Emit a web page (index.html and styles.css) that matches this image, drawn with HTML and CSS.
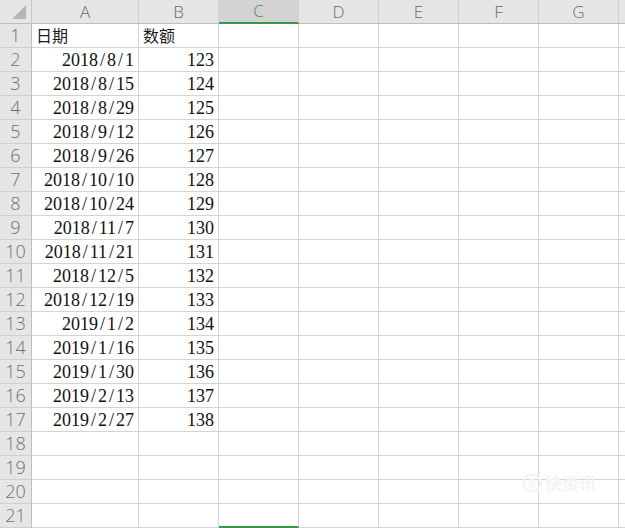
FILE: index.html
```html
<!DOCTYPE html>
<html lang="zh">
<head>
<meta charset="utf-8">
<title>Sheet</title>
<link rel="stylesheet" href="styles.css">
</head>
<body>
<div class="sheet">
  <div class="corner"><span class="tri"></span></div>
  <div class="h">A</div><div class="h">B</div><div class="h sel">C</div><div class="h">D</div><div class="h">E</div><div class="h">F</div><div class="h">G</div><div class="h last"></div>

  <div class="rh">1</div><div class="c t">日期</div><div class="c t">数额</div><div class="c"></div><div class="c"></div><div class="c"></div><div class="c"></div><div class="c"></div><div class="c last"></div>
  <div class="rh">2</div><div class="c r">2018<span class="sl">/</span>8<span class="sl">/</span>1</div><div class="c r">123</div><div class="c"></div><div class="c"></div><div class="c"></div><div class="c"></div><div class="c"></div><div class="c last"></div>
  <div class="rh">3</div><div class="c r">2018<span class="sl">/</span>8<span class="sl">/</span>15</div><div class="c r">124</div><div class="c"></div><div class="c"></div><div class="c"></div><div class="c"></div><div class="c"></div><div class="c last"></div>
  <div class="rh">4</div><div class="c r">2018<span class="sl">/</span>8<span class="sl">/</span>29</div><div class="c r">125</div><div class="c"></div><div class="c"></div><div class="c"></div><div class="c"></div><div class="c"></div><div class="c last"></div>
  <div class="rh">5</div><div class="c r">2018<span class="sl">/</span>9<span class="sl">/</span>12</div><div class="c r">126</div><div class="c"></div><div class="c"></div><div class="c"></div><div class="c"></div><div class="c"></div><div class="c last"></div>
  <div class="rh">6</div><div class="c r">2018<span class="sl">/</span>9<span class="sl">/</span>26</div><div class="c r">127</div><div class="c"></div><div class="c"></div><div class="c"></div><div class="c"></div><div class="c"></div><div class="c last"></div>
  <div class="rh">7</div><div class="c r">2018<span class="sl">/</span>10<span class="sl">/</span>10</div><div class="c r">128</div><div class="c"></div><div class="c"></div><div class="c"></div><div class="c"></div><div class="c"></div><div class="c last"></div>
  <div class="rh">8</div><div class="c r">2018<span class="sl">/</span>10<span class="sl">/</span>24</div><div class="c r">129</div><div class="c"></div><div class="c"></div><div class="c"></div><div class="c"></div><div class="c"></div><div class="c last"></div>
  <div class="rh">9</div><div class="c r">2018<span class="sl">/</span>11<span class="sl">/</span>7</div><div class="c r">130</div><div class="c"></div><div class="c"></div><div class="c"></div><div class="c"></div><div class="c"></div><div class="c last"></div>
  <div class="rh">10</div><div class="c r">2018<span class="sl">/</span>11<span class="sl">/</span>21</div><div class="c r">131</div><div class="c"></div><div class="c"></div><div class="c"></div><div class="c"></div><div class="c"></div><div class="c last"></div>
  <div class="rh">11</div><div class="c r">2018<span class="sl">/</span>12<span class="sl">/</span>5</div><div class="c r">132</div><div class="c"></div><div class="c"></div><div class="c"></div><div class="c"></div><div class="c"></div><div class="c last"></div>
  <div class="rh">12</div><div class="c r">2018<span class="sl">/</span>12<span class="sl">/</span>19</div><div class="c r">133</div><div class="c"></div><div class="c"></div><div class="c"></div><div class="c"></div><div class="c"></div><div class="c last"></div>
  <div class="rh">13</div><div class="c r">2019<span class="sl">/</span>1<span class="sl">/</span>2</div><div class="c r">134</div><div class="c"></div><div class="c"></div><div class="c"></div><div class="c"></div><div class="c"></div><div class="c last"></div>
  <div class="rh">14</div><div class="c r">2019<span class="sl">/</span>1<span class="sl">/</span>16</div><div class="c r">135</div><div class="c"></div><div class="c"></div><div class="c"></div><div class="c"></div><div class="c"></div><div class="c last"></div>
  <div class="rh">15</div><div class="c r">2019<span class="sl">/</span>1<span class="sl">/</span>30</div><div class="c r">136</div><div class="c"></div><div class="c"></div><div class="c"></div><div class="c"></div><div class="c"></div><div class="c last"></div>
  <div class="rh">16</div><div class="c r">2019<span class="sl">/</span>2<span class="sl">/</span>13</div><div class="c r">137</div><div class="c"></div><div class="c"></div><div class="c"></div><div class="c"></div><div class="c"></div><div class="c last"></div>
  <div class="rh">17</div><div class="c r">2019<span class="sl">/</span>2<span class="sl">/</span>27</div><div class="c r">138</div><div class="c"></div><div class="c"></div><div class="c"></div><div class="c"></div><div class="c"></div><div class="c last"></div>
  <div class="rh">18</div><div class="c"></div><div class="c"></div><div class="c"></div><div class="c"></div><div class="c"></div><div class="c"></div><div class="c"></div><div class="c last"></div>
  <div class="rh">19</div><div class="c"></div><div class="c"></div><div class="c"></div><div class="c"></div><div class="c"></div><div class="c"></div><div class="c"></div><div class="c last"></div>
  <div class="rh">20</div><div class="c"></div><div class="c"></div><div class="c"></div><div class="c"></div><div class="c"></div><div class="c"></div><div class="c"></div><div class="c last"></div>
  <div class="rh">21</div><div class="c"></div><div class="c"></div><div class="c selb"></div><div class="c"></div><div class="c"></div><div class="c"></div><div class="c"></div><div class="c last"></div>

  <div class="mark">
    <svg width="20" height="20" viewBox="0 0 20 20"><circle cx="10" cy="10" r="8.5" fill="none" stroke="#f4f4f4" stroke-width="2.5"/><text x="10" y="14.5" text-anchor="middle" font-size="12" fill="#f4f4f4" font-family="Liberation Sans, sans-serif" font-weight="bold">S</text></svg>
    <span>快资讯</span>
  </div>
</div>
</body>
</html>
```
FILE: styles.css
```css
* { box-sizing: border-box; }
html, body { margin: 0; padding: 0; background: #ffffff; }
body { width: 625px; height: 528px; overflow: hidden; }

.sheet {
  position: relative;
  display: grid;
  grid-template-columns: 32px 107px 80px 80px 80px 80px 80px 80px 6px;
  grid-auto-rows: 24px;
  width: 625px;
}

.corner {
  position: relative;
  background: #e6e6e6;
  border-right: 1px solid #c8c8c8;
  border-bottom: 1px solid #bdbdbd;
}
.tri {
  position: absolute;
  right: 5px;
  bottom: 4px;
  width: 0;
  height: 0;
  border-left: 14px solid transparent;
  border-bottom: 14px solid #b5b5b5;
}

.h {
  background: #e6e6e6;
  border-right: 1px solid #cfcfcf;
  border-bottom: 1px solid #bdbdbd;
  color: #6a6a6a;
  font-family: "Open Sans", "Noto Sans", sans-serif;
  font-weight: 300;
  font-size: 17px;
  line-height: 23px;
  text-align: center;
}
.h.sel {
  background: #d3d3d3;
  color: #3f9b47;
  border-bottom: 2px solid #3a9a44;
  line-height: 22px;
}
.h.last { border-right: none; }

.rh {
  background: #e6e6e6;
  border-right: 1px solid #bdbdbd;
  border-bottom: 1px solid #d0d0d0;
  color: #707070;
  font-family: "Open Sans", "Noto Sans", sans-serif;
  font-weight: 300;
  font-size: 18px;
  line-height: 23px;
  text-align: center;
}

.c {
  border-right: 1px solid #d4d4d4;
  border-bottom: 1px solid #d4d4d4;
  color: #111111;
  font-family: "Liberation Serif", "Noto Sans CJK SC", serif;
  font-size: 18px;
  line-height: 25px;
  white-space: nowrap;
  overflow: hidden;
}
.c.last { border-right: none; }
.c.r { text-align: right; padding-right: 4px; }
.c.t {
  font-family: "Noto Sans CJK SC", "Noto Sans", sans-serif;
  font-size: 16px;
  line-height: 23px;
  padding-left: 4px;
  color: #1a1a1a;
}
.sl { padding: 0 2px; }
.c.selb { border-bottom: 2px solid #3a9a44; }

.mark {
  position: absolute;
  left: 522px;
  top: 470px;
  display: flex;
  align-items: center;
  gap: 3px;
  color: #f4f4f4;
  font-family: "Noto Sans CJK SC", sans-serif;
  font-size: 17px;
  font-weight: bold;
  pointer-events: none;
}
```
